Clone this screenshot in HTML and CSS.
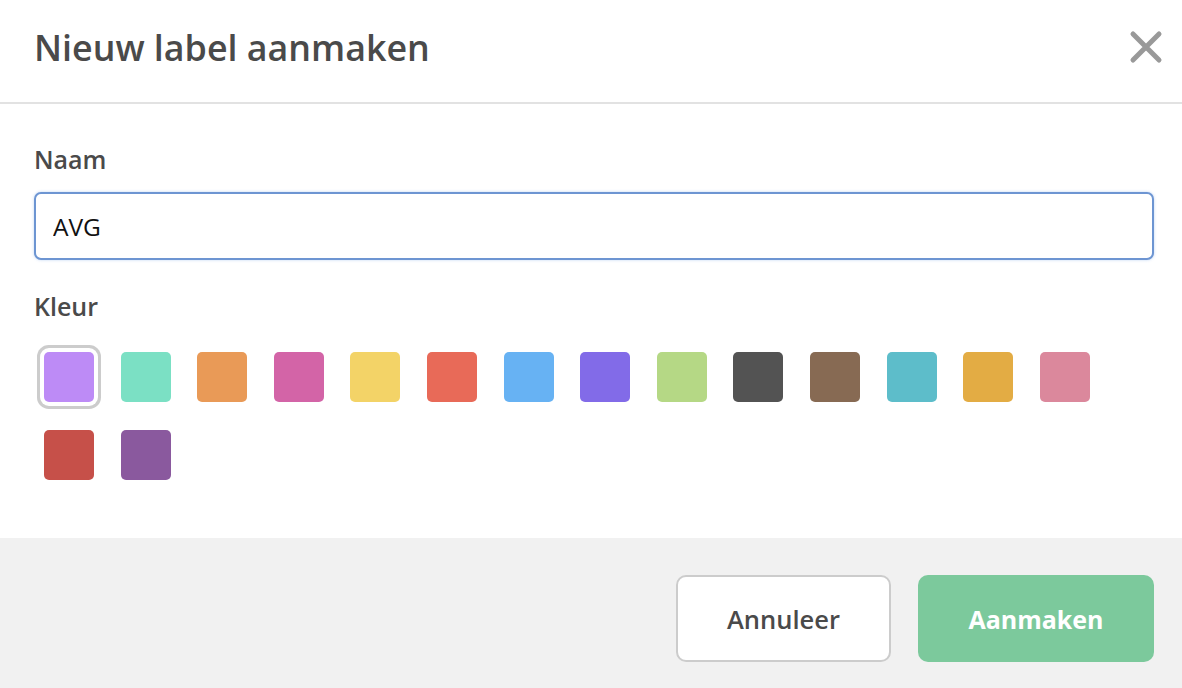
FILE: index.html
```html
<!DOCTYPE html>
<html lang="nl">
<head>
<meta charset="utf-8">
<title>Nieuw label aanmaken</title>
<link rel="stylesheet" href="styles.css">
</head>
<body>
<div class="modal">
  <header class="modal-header">
    <h1 class="modal-title">Nieuw label aanmaken</h1>
    <button class="close-btn" aria-label="Sluiten">
      <svg width="34" height="34" viewBox="0 0 34 34"><path d="M4 4 L30 30 M30 4 L4 30" stroke="#999" stroke-width="5" stroke-linecap="round" fill="none"/></svg>
    </button>
  </header>
  <section class="modal-body">
    <label class="field-label" for="naam">Naam</label>
    <input id="naam" class="text-input" type="text" value="AVG">
    <div class="field-label kleur-label">Kleur</div>
    <div class="swatches">
      <span class="swatch selected c1"></span>
      <span class="swatch c2"></span>
      <span class="swatch c3"></span>
      <span class="swatch c4"></span>
      <span class="swatch c5"></span>
      <span class="swatch c6"></span>
      <span class="swatch c7"></span>
      <span class="swatch c8"></span>
      <span class="swatch c9"></span>
      <span class="swatch c10"></span>
      <span class="swatch c11"></span>
      <span class="swatch c12"></span>
      <span class="swatch c13"></span>
      <span class="swatch c14"></span>
      <span class="swatch c15"></span>
      <span class="swatch c16"></span>
    </div>
  </section>
  <footer class="modal-footer">
    <button class="btn btn-cancel">Annuleer</button>
    <button class="btn btn-primary">Aanmaken</button>
  </footer>
</div>
</body>
</html>
```

FILE: styles.css
```css
html, body {
  margin: 0;
  padding: 0;
  background: #fff;
}
body {
  font-family: "Open Sans", "Liberation Sans", sans-serif;
  color: #4a4a4a;
}
.modal {
  width: 1182px;
  height: 688px;
  display: flex;
  flex-direction: column;
}
.modal-header {
  flex: 0 0 104px;
  box-sizing: border-box;
  display: flex;
  align-items: center;
  justify-content: space-between;
  padding: 0 19px 9px 34px;
  border-bottom: 2px solid #e2e2e2;
}
.modal-title {
  margin: 0;
  font-size: 35.8px;
  line-height: 46px;
  font-weight: 600;
  color: #4a4a4a;
}
.close-btn {
  border: 0;
  background: none;
  padding: 0;
  width: 34px;
  height: 34px;
  display: flex;
  cursor: pointer;
}
.modal-body {
  flex: 1 1 auto;
  padding: 40px 28px 0 34px;
  display: flex;
  flex-direction: column;
  align-items: flex-start;
}
.field-label {
  font-size: 25px;
  font-weight: 600;
  line-height: 30px;
  color: #4a4a4a;
}
.text-input {
  margin-top: 18px;
  width: 1120px;
  height: 68px;
  box-sizing: border-box;
  border: 2px solid #6d95d2;
  border-radius: 7px;
  box-shadow: 0 0 3px rgba(110, 160, 230, 0.45);
  padding: 0 17px;
  font-family: "Open Sans", "Liberation Sans", sans-serif;
  font-size: 24.5px;
  color: #111;
  outline: none;
}
.kleur-label {
  margin-top: 31px;
}
.swatches {
  margin-top: 31px;
  padding-left: 10px;
  display: flex;
  flex-wrap: wrap;
  column-gap: 26.6px;
  row-gap: 28px;
  width: 1100px;
}
.swatch {
  width: 50px;
  height: 50px;
  border-radius: 5px;
  display: block;
}
.swatch.selected {
  box-shadow: 0 0 0 4px #fff, 0 0 0 7px #cccccc;
}
.c1 { background: #bd8bf6; }
.c2 { background: #7be0c4; }
.c3 { background: #e99a57; }
.c4 { background: #d364a7; }
.c5 { background: #f3d367; }
.c6 { background: #e86a58; }
.c7 { background: #67b2f3; }
.c8 { background: #826be8; }
.c9 { background: #b5d885; }
.c10 { background: #535353; }
.c11 { background: #876a53; }
.c12 { background: #5dbdca; }
.c13 { background: #e3ac44; }
.c14 { background: #db889c; }
.c15 { background: #c65049; }
.c16 { background: #8a599e; }
.modal-footer {
  flex: 0 0 150px;
  box-sizing: border-box;
  background: #f1f1f1;
  display: flex;
  justify-content: flex-end;
  align-items: flex-start;
  gap: 27px;
  padding: 37px 28px 0 0;
}
.btn {
  height: 87px;
  border-radius: 10px;
  font-family: "Open Sans", "Liberation Sans", sans-serif;
  font-size: 25.5px;
  font-weight: 600;
  cursor: pointer;
}
.btn-cancel {
  width: 215px;
  background: #fff;
  border: 2px solid #cccccc;
  color: #4a4a4a;
}
.btn-primary {
  width: 236px;
  background: #7cc99c;
  border: 0;
  color: #fff;
  font-weight: 700;
  font-size: 25px;
}
```
